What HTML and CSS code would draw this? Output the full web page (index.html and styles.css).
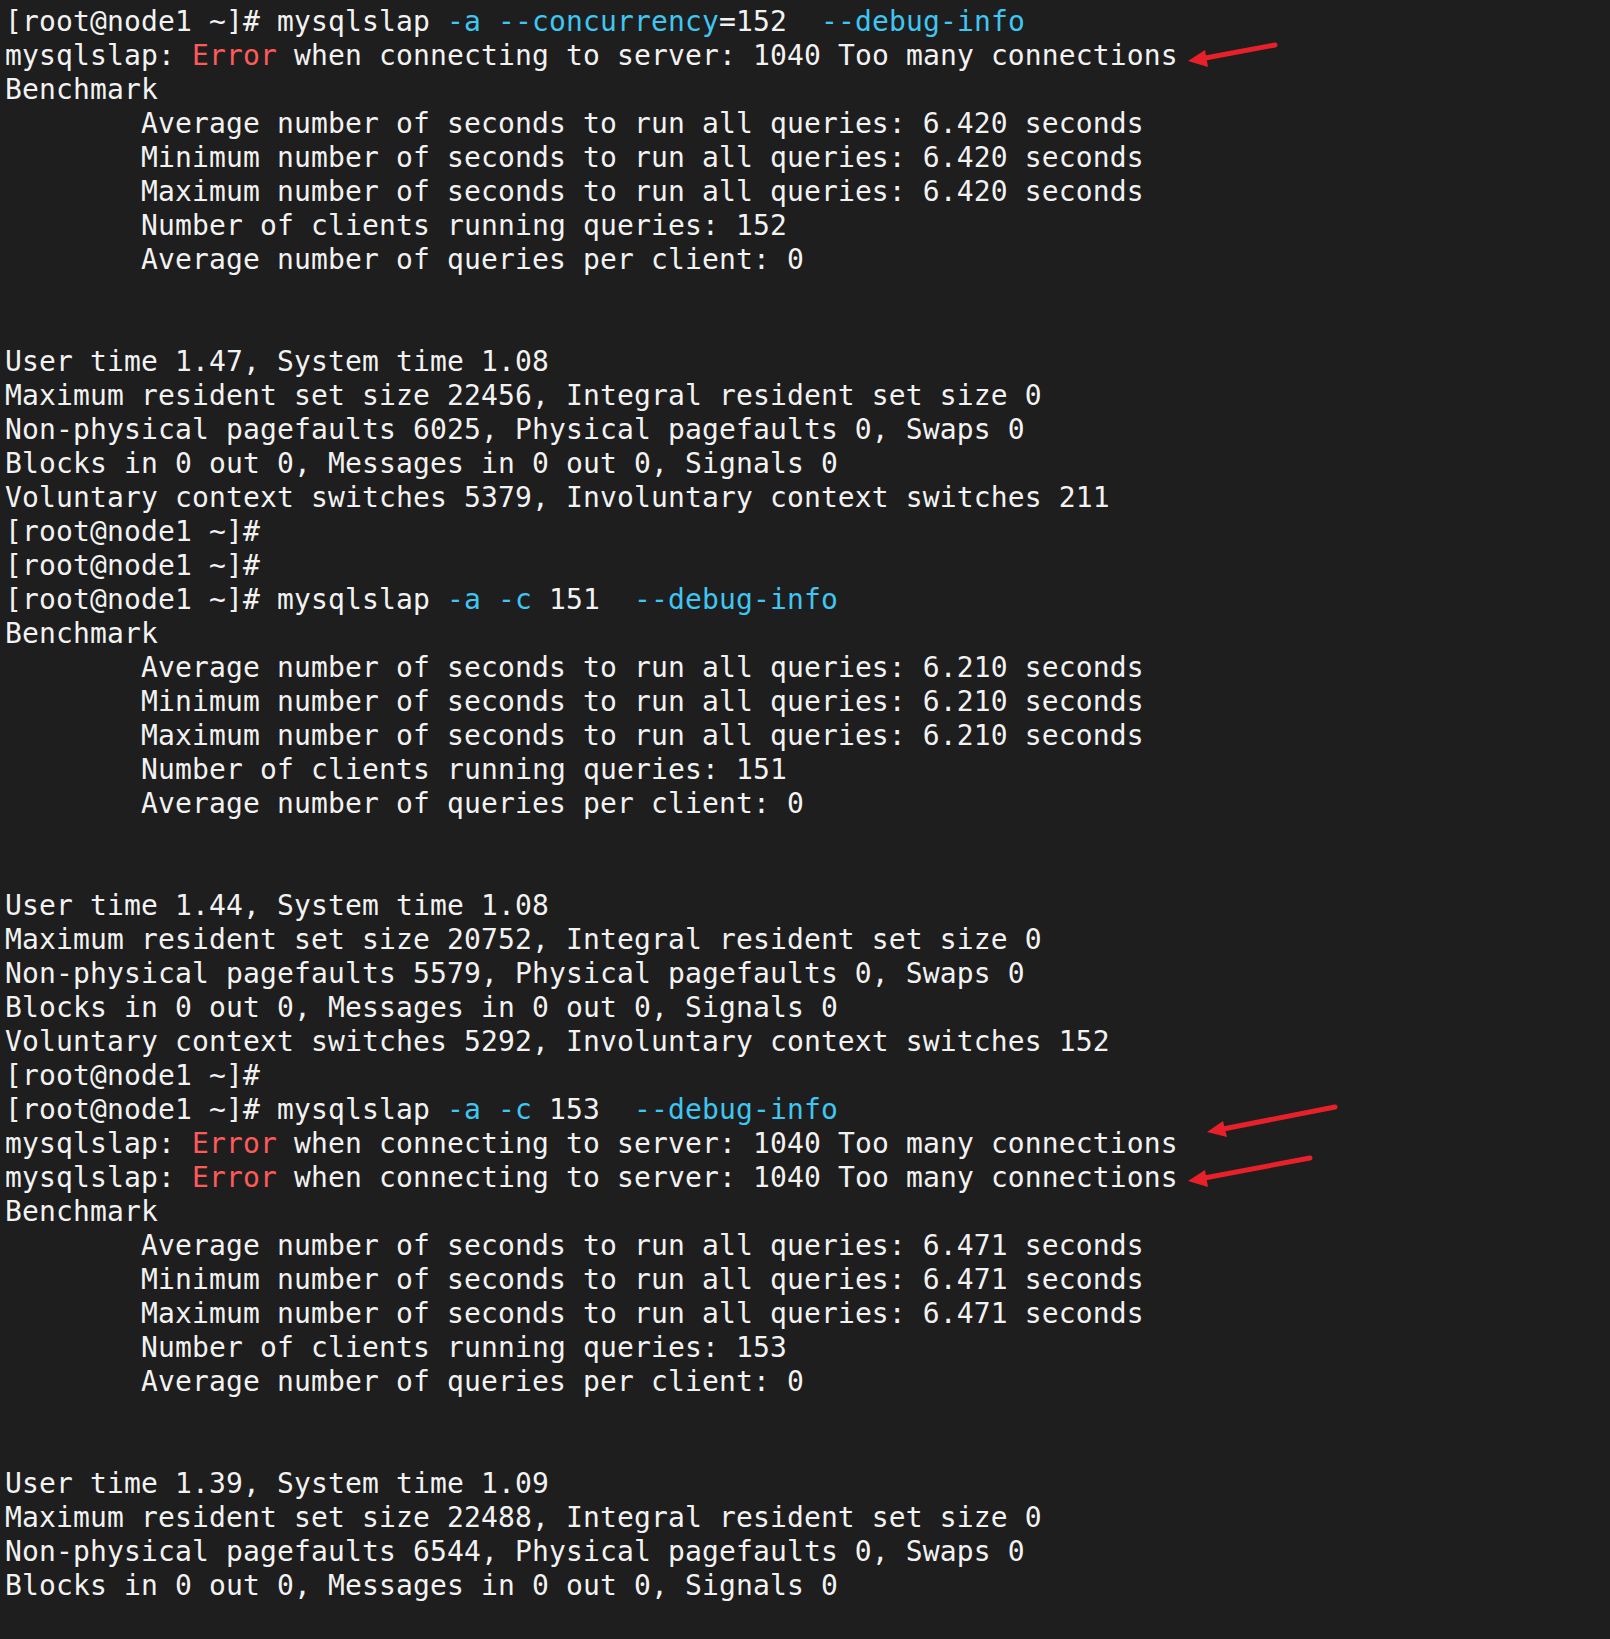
FILE: index.html
```html
<!DOCTYPE html>
<html>
<head>
<meta charset="utf-8">
<link rel="stylesheet" href="styles.css">
</head>
<body>
<div class="term">
<pre class="out">[root@node1 ~]# mysqlslap <span class="c">-a --concurrency</span>=152  <span class="c">--debug-info</span>
mysqlslap: <span class="r">Error</span> when connecting to server: 1040 Too many connections
Benchmark
	Average number of seconds to run all queries: 6.420 seconds
	Minimum number of seconds to run all queries: 6.420 seconds
	Maximum number of seconds to run all queries: 6.420 seconds
	Number of clients running queries: 152
	Average number of queries per client: 0


User time 1.47, System time 1.08
Maximum resident set size 22456, Integral resident set size 0
Non-physical pagefaults 6025, Physical pagefaults 0, Swaps 0
Blocks in 0 out 0, Messages in 0 out 0, Signals 0
Voluntary context switches 5379, Involuntary context switches 211
[root@node1 ~]#
[root@node1 ~]#
[root@node1 ~]# mysqlslap <span class="c">-a -c</span> 151  <span class="c">--debug-info</span>
Benchmark
	Average number of seconds to run all queries: 6.210 seconds
	Minimum number of seconds to run all queries: 6.210 seconds
	Maximum number of seconds to run all queries: 6.210 seconds
	Number of clients running queries: 151
	Average number of queries per client: 0


User time 1.44, System time 1.08
Maximum resident set size 20752, Integral resident set size 0
Non-physical pagefaults 5579, Physical pagefaults 0, Swaps 0
Blocks in 0 out 0, Messages in 0 out 0, Signals 0
Voluntary context switches 5292, Involuntary context switches 152
[root@node1 ~]#
[root@node1 ~]# mysqlslap <span class="c">-a -c</span> 153  <span class="c">--debug-info</span>
mysqlslap: <span class="r">Error</span> when connecting to server: 1040 Too many connections
mysqlslap: <span class="r">Error</span> when connecting to server: 1040 Too many connections
Benchmark
	Average number of seconds to run all queries: 6.471 seconds
	Minimum number of seconds to run all queries: 6.471 seconds
	Maximum number of seconds to run all queries: 6.471 seconds
	Number of clients running queries: 153
	Average number of queries per client: 0


User time 1.39, System time 1.09
Maximum resident set size 22488, Integral resident set size 0
Non-physical pagefaults 6544, Physical pagefaults 0, Swaps 0
Blocks in 0 out 0, Messages in 0 out 0, Signals 0</pre>
<svg class="arrows" width="1610" height="1639" viewBox="0 0 1610 1639">
  <g stroke="#e8202a" stroke-width="5" stroke-linecap="round" fill="#e8202a">
    <line x1="1275" y1="45" x2="1200" y2="59"/>
    <polygon points="1188,61 1205,50 1208,67" stroke="none"/>
    <line x1="1335" y1="1107" x2="1218" y2="1130"/>
    <polygon points="1207,1132 1223,1121 1227,1137" stroke="none"/>
    <line x1="1310" y1="1158" x2="1199" y2="1179"/>
    <polygon points="1188,1181 1205,1170 1208,1187" stroke="none"/>
  </g>
</svg>
</div>
</body>
</html>
```
FILE: styles.css
```css
html, body {
  margin: 0;
  padding: 0;
  background: #1e1e1e;
}
.term {
  position: relative;
  width: 1610px;
  height: 1639px;
  background: #1e1e1e;
  overflow: hidden;
}
.out {
  margin: 0;
  padding: 5px 0 0 5px;
  font-family: "DejaVu Sans Mono", monospace;
  font-size: 28px;
  letter-spacing: 0.14px;
  line-height: 34px;
  color: #f2f2f2;
  tab-size: 8;
  -moz-tab-size: 8;
  white-space: pre;
}
.c { color: #3fc6f2; }
.r { color: #ff5a5a; }
.arrows {
  position: absolute;
  left: 0;
  top: 0;
}
```
